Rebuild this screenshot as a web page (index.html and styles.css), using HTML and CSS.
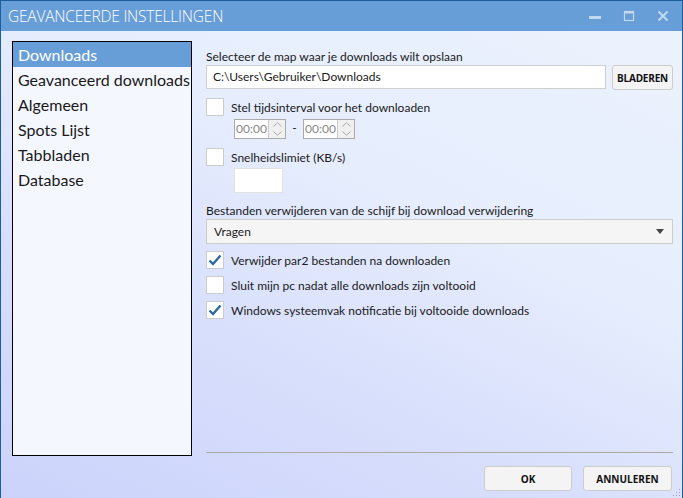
FILE: index.html
```html
<!DOCTYPE html>
<html lang="nl">
<head>
    <meta charset="UTF-8">
    <title>Geavanceerde instellingen</title>
    <link rel="stylesheet" href="styles.css">
</head>
<body>

<div class="window">
    <div class="titlebar">
        <span class="title">GEAVANCEERDE INSTELLINGEN</span>
        <div class="controls">
            <svg width="14" height="14" viewBox="0 0 14 14"><rect x="1" y="7" width="12" height="3" fill="#c3d9f2"/></svg>
            <svg width="14" height="14" viewBox="0 0 14 14"><rect x="2.5" y="2.5" width="9" height="9" fill="none" stroke="#c3d9f2" stroke-width="1.2"/><rect x="2.5" y="2.5" width="9" height="2" fill="#c3d9f2"/></svg>
            <svg width="14" height="14" viewBox="0 0 14 14"><path d="M2.5 2.5 L11.5 11.5 M11.5 2.5 L2.5 11.5" stroke="#c3d9f2" stroke-width="2"/></svg>
        </div>
    </div>

    <div class="content">
        <ul class="menu">
            <li class="active">Downloads</li>
            <li>Geavanceerd downloads</li>
            <li>Algemeen</li>
            <li>Spots Lijst</li>
            <li>Tabbladen</li>
            <li>Database</li>
        </ul>

        <div class="panel">
            <label class="field-label first">Selecteer de map waar je downloads wilt opslaan</label>
            <div class="path-row">
                <div class="textbox">C:\Users\Gebruiker\Downloads</div>
                <button class="btn small">BLADEREN</button>
            </div>

            <div class="check-row">
                <span class="checkbox"></span>
                <span>Stel tijdsinterval voor het downloaden</span>
            </div>
            <div class="time-row">
                <div class="spinner">
                    <span class="spin-value">00:00</span>
                    <span class="spin-buttons">
                        <svg width="9" height="5" viewBox="0 0 9 5"><path d="M0.5 4.5 L4.5 0.8 L8.5 4.5" fill="none" stroke="#aaa"/></svg>
                        <svg width="9" height="5" viewBox="0 0 9 5"><path d="M0.5 0.5 L4.5 4.2 L8.5 0.5" fill="none" stroke="#aaa"/></svg>
                    </span>
                </div>
                <span class="dash">-</span>
                <div class="spinner">
                    <span class="spin-value">00:00</span>
                    <span class="spin-buttons">
                        <svg width="9" height="5" viewBox="0 0 9 5"><path d="M0.5 4.5 L4.5 0.8 L8.5 4.5" fill="none" stroke="#aaa"/></svg>
                        <svg width="9" height="5" viewBox="0 0 9 5"><path d="M0.5 0.5 L4.5 4.2 L8.5 0.5" fill="none" stroke="#aaa"/></svg>
                    </span>
                </div>
            </div>

            <div class="check-row gap">
                <span class="checkbox"></span>
                <span>Snelheidslimiet (KB/s)</span>
            </div>
            <div class="speed-box"></div>

            <label class="field-label">Bestanden verwijderen van de schijf bij download verwijdering</label>
            <div class="select">
                <span>Vragen</span>
                <svg width="8" height="5" viewBox="0 0 8 5"><path d="M0 0 L8 0 L4 5 Z" fill="#444"/></svg>
            </div>

            <div class="check-row list">
                <span class="checkbox checked">
                    <svg width="14" height="12" viewBox="0 0 14 12"><path d="M1.5 6.5 L5 10 L12.5 1.5" fill="none" stroke="#2c6aa3" stroke-width="2.4"/></svg>
                </span>
                <span>Verwijder par2 bestanden na downloaden</span>
            </div>
            <div class="check-row list">
                <span class="checkbox"></span>
                <span>Sluit mijn pc nadat alle downloads zijn voltooid</span>
            </div>
            <div class="check-row list">
                <span class="checkbox checked">
                    <svg width="14" height="12" viewBox="0 0 14 12"><path d="M1.5 6.5 L5 10 L12.5 1.5" fill="none" stroke="#2c6aa3" stroke-width="2.4"/></svg>
                </span>
                <span>Windows systeemvak notificatie bij voltooide downloads</span>
            </div>

            <div class="separator"></div>
        </div>

        <div class="footer">
            <button class="btn">OK</button>
            <button class="btn">ANNULEREN</button>
        </div>
    </div>

    <svg class="grip" width="10" height="10" viewBox="0 0 10 10">
        <rect x="8" y="2" width="1" height="1" fill="#9aa4c4"/>
        <rect x="5" y="5" width="1" height="1" fill="#9aa4c4"/>
        <rect x="8" y="5" width="1" height="1" fill="#9aa4c4"/>
        <rect x="2" y="8" width="1" height="1" fill="#9aa4c4"/>
        <rect x="5" y="8" width="1" height="1" fill="#9aa4c4"/>
        <rect x="8" y="8" width="1" height="1" fill="#9aa4c4"/>
    </svg>
</div>

</body>
</html>
```

FILE: styles.css
```css
body {
    margin: 0;
    font-family: Lato, "Open Sans", sans-serif;
    font-size: 12px;
    color: #1a1a1a;
}
.window {
    position: relative;
    width: 683px;
    height: 498px;
    box-sizing: border-box;
    border: 1px solid #1d5f9c;
    border-bottom: none;
    background: linear-gradient(25deg, #cbd3fb 0%, #d9e0fc 35%, #e6edfd 60%, #ecf3fd 100%);
    display: flex;
    flex-direction: column;
}
.titlebar {
    height: 30px;
    background-color: #689ed8;
    display: flex;
    align-items: center;
    justify-content: space-between;
    padding: 0 12px 0 7px;
}
.title {
    color: white;
    font-family: "Open Sans", sans-serif;
    font-size: 15.5px;
    font-weight: 300;
    letter-spacing: -0.2px;
}
.controls {
    display: flex;
    gap: 20px;
}
.content {
    flex: 1;
    display: grid;
    grid-template-columns: 180px 1fr;
    grid-template-rows: 415px auto;
    column-gap: 14px;
    padding: 10px 9px 0 11px;
}
.menu {
    list-style: none;
    margin: 0;
    padding: 0;
    border: 1px solid #000;
    background-color: #f5f7fe;
    font-size: 16px;
}
.menu li {
    height: 25px;
    line-height: 26px;
    padding-left: 5px;
    white-space: nowrap;
    overflow: hidden;
}
.menu li.active {
    background-color: #689ed8;
    color: white;
}
.panel {
    display: flex;
    flex-direction: column;
}
.field-label {
    display: block;
    line-height: 16px;
    margin-top: 10px;
}
.field-label.first {
    margin-top: 8px;
}
.path-row {
    display: flex;
    gap: 6px;
}
.textbox {
    flex: 1;
    height: 24px;
    box-sizing: border-box;
    border: 1px solid #cfcfcf;
    background: white;
    padding-left: 6px;
    line-height: 22px;
}
.btn {
    font-family: "Open Sans", sans-serif;
    font-weight: bold;
    font-size: 10px;
    color: #111;
    background-color: #f4f4f4;
    border: 1px solid #cccccc;
    border-radius: 3px;
    height: 25px;
    width: 89px;
}
.btn.small {
    width: 61px;
    padding: 0;
    letter-spacing: -0.2px;
}
.check-row {
    display: flex;
    align-items: center;
    gap: 7px;
    margin-top: 8px;
    height: 18px;
}
.check-row.gap {
    margin-top: 9px;
}
.check-row.list {
    margin-top: 7px;
}
.checkbox {
    width: 18px;
    height: 18px;
    box-sizing: border-box;
    border: 1px solid #cccccc;
    background: white;
    display: flex;
    align-items: center;
    justify-content: center;
}
.time-row {
    display: flex;
    align-items: center;
    margin: 3px 0 0 28px;
}
.spinner {
    display: flex;
    width: 52px;
    height: 20px;
    box-sizing: border-box;
    border: 1px solid #aaaaaa;
    background: white;
}
.spin-value {
    flex: 1;
    color: #888;
    line-height: 18px;
    padding-left: 1px;
}
.spin-buttons {
    width: 16px;
    display: flex;
    flex-direction: column;
    justify-content: space-around;
    align-items: center;
    border-left: 1px solid #cccccc;
    background-color: #f0f0f0;
}
.dash {
    width: 17px;
    text-align: center;
    margin-top: -3px;
}
.speed-box {
    width: 49px;
    height: 25px;
    margin: 2px 0 0 28px;
    border: 1px solid #e2e2e2;
    box-sizing: border-box;
    background: white;
}
.select {
    height: 25px;
    box-sizing: border-box;
    border: 1px solid #cccccc;
    background-color: #f5f5f5;
    display: flex;
    align-items: center;
    justify-content: space-between;
    padding: 0 8px 0 7px;
}
.separator {
    margin-top: auto;
    margin-bottom: 3px;
    border-top: 1px solid #aaaaaa;
}
.footer {
    grid-column: 2;
    display: flex;
    justify-content: flex-end;
    gap: 11px;
    padding: 10px 1px 0 0;
}
.footer .btn:first-child {
    width: 88px;
}
.grip {
    position: absolute;
    right: 1px;
    bottom: 1px;
}
```
